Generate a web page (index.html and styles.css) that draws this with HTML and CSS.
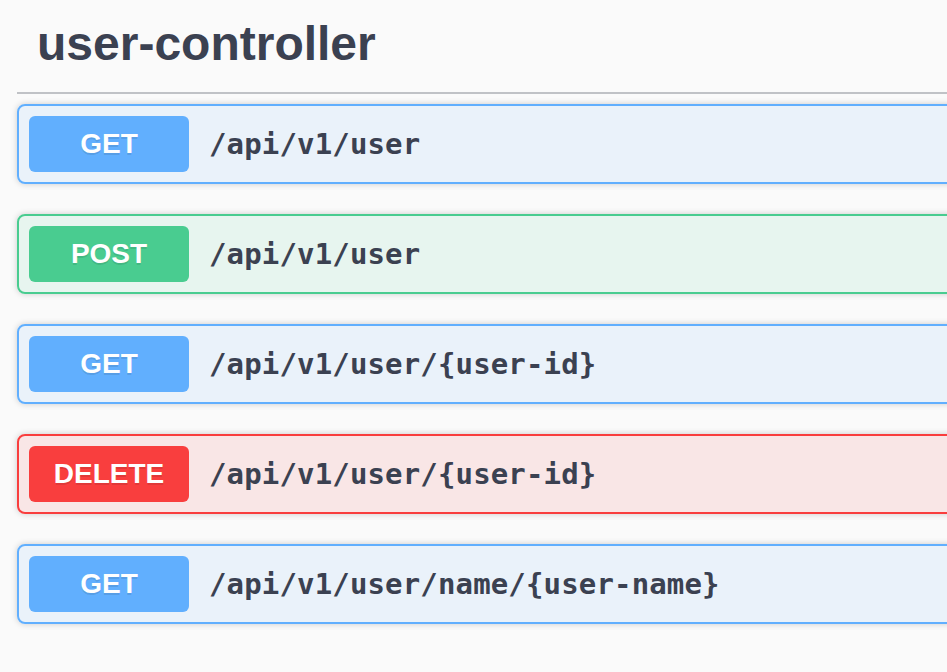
FILE: index.html
```html
<!DOCTYPE html>
<html lang="en">
<head>
<meta charset="utf-8">
<title>user-controller</title>
<link rel="stylesheet" href="styles.css">
</head>
<body>
<div class="page">
<div class="section">
  <h3 class="tag">user-controller</h3>
  <div class="ops">
    <div class="op op-get">
      <div class="summary"><span class="method">GET</span><span class="path">/api/v1/user</span></div>
    </div>
    <div class="op op-post">
      <div class="summary"><span class="method">POST</span><span class="path">/api/v1/user</span></div>
    </div>
    <div class="op op-get">
      <div class="summary"><span class="method">GET</span><span class="path">/api/v1/user/{user-id}</span></div>
    </div>
    <div class="op op-delete">
      <div class="summary"><span class="method">DELETE</span><span class="path">/api/v1/user/{user-id}</span></div>
    </div>
    <div class="op op-get">
      <div class="summary"><span class="method">GET</span><span class="path">/api/v1/user/name/{user-name}</span></div>
    </div>
  </div>
</div>
</div>
</body>
</html>
```
FILE: styles.css
```css
html, body {
  margin: 0;
  padding: 0;
  background: #fafafa;
  overflow: hidden;
}
body {
  font-family: "Liberation Sans", Arial, sans-serif;
  color: #3b4151;
}
.page {
  width: 947px;
  height: 672px;
  overflow: hidden;
}
.section {
  margin-left: 17px;
  margin-right: -40px;
}
.tag {
  margin: 0 0 10px 0;
  padding: 17px 40px 21px 20px;
  font-size: 48px;
  line-height: 54px;
  font-weight: bold;
  color: #3b4151;
  border-bottom: 2px solid rgba(59, 65, 81, 0.3);
}
.ops {
  display: flex;
  flex-direction: column;
  gap: 30px;
}
.op {
  border: 2px solid #61affe;
  border-radius: 8px;
  box-shadow: 0 0 6px rgba(0, 0, 0, 0.19);
}
.summary {
  display: flex;
  align-items: center;
  padding: 10px;
}
.method {
  min-width: 160px;
  padding: 12px 0;
  font-size: 28px;
  line-height: 32px;
  font-weight: bold;
  text-align: center;
  color: #fff;
  border-radius: 6px;
  text-shadow: 0 2px 0 rgba(0, 0, 0, 0.1);
}
.path {
  padding: 0 20px;
  font-family: "DejaVu Sans Mono", monospace;
  font-weight: bold;
  font-size: 29px;
  letter-spacing: 0.15px;
  color: #3b4151;
}
.op-get { background: rgba(97, 175, 254, 0.1); border-color: #61affe; }
.op-get .method { background: #61affe; }
.op-post { background: rgba(73, 204, 144, 0.1); border-color: #49cc90; }
.op-post .method { background: #49cc90; }
.op-delete { background: rgba(249, 62, 62, 0.1); border-color: #f93e3e; }
.op-delete .method { background: #f93e3e; }
```
